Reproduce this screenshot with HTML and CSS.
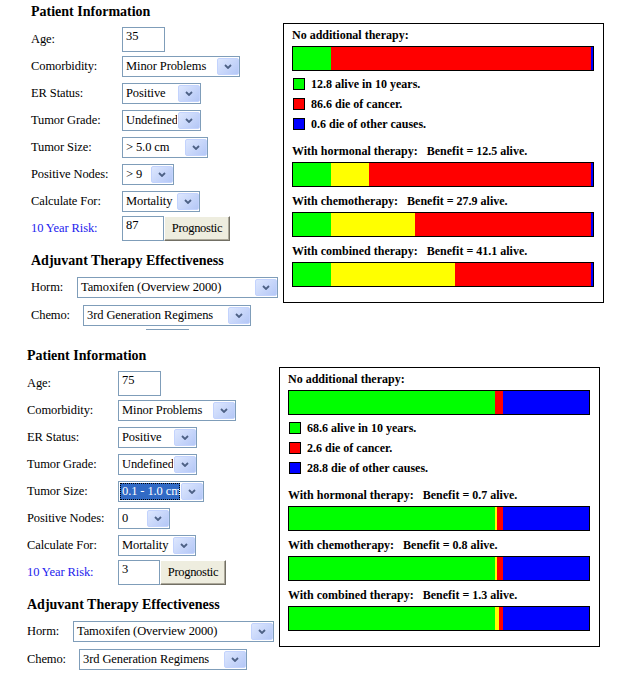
FILE: index.html
```html
<!DOCTYPE html>
<html lang="en">
<head>
    <meta charset="UTF-8">
    <title>Adjuvant Therapy Calculator</title>
    <link rel="stylesheet" href="styles.css">
</head>
<body>
    <div class="calc calc-a">
        <div class="inputs">
            <h2>Patient Information</h2>
            <div class="row row-age">
                <label>Age:</label>
                <input class="text" type="text" value="35">
            </div>
            <div class="row row-first">
                <label>Comorbidity:</label>
                <div class="sel w-como"><span class="val">Minor Problems</span><span class="btn"><svg width="8" height="5" viewBox="0 0 8 5"><path d="M1 1L4 4L7 1" fill="none" stroke="#4d6185" stroke-width="1.8"/></svg></span></div>
            </div>
            <div class="row">
                <label>ER Status:</label>
                <div class="sel w-er"><span class="val">Positive</span><span class="btn"><svg width="8" height="5" viewBox="0 0 8 5"><path d="M1 1L4 4L7 1" fill="none" stroke="#4d6185" stroke-width="1.8"/></svg></span></div>
            </div>
            <div class="row">
                <label>Tumor Grade:</label>
                <div class="sel w-er"><span class="val">Undefined</span><span class="btn"><svg width="8" height="5" viewBox="0 0 8 5"><path d="M1 1L4 4L7 1" fill="none" stroke="#4d6185" stroke-width="1.8"/></svg></span></div>
            </div>
            <div class="row">
                <label>Tumor Size:</label>
                <div class="sel w-size"><span class="val">&gt; 5.0 cm</span><span class="btn"><svg width="8" height="5" viewBox="0 0 8 5"><path d="M1 1L4 4L7 1" fill="none" stroke="#4d6185" stroke-width="1.8"/></svg></span></div>
            </div>
            <div class="row">
                <label>Positive Nodes:</label>
                <div class="sel w-nodes"><span class="val">&gt; 9</span><span class="btn"><svg width="8" height="5" viewBox="0 0 8 5"><path d="M1 1L4 4L7 1" fill="none" stroke="#4d6185" stroke-width="1.8"/></svg></span></div>
            </div>
            <div class="row">
                <label>Calculate For:</label>
                <div class="sel w-calc"><span class="val">Mortality</span><span class="btn"><svg width="8" height="5" viewBox="0 0 8 5"><path d="M1 1L4 4L7 1" fill="none" stroke="#4d6185" stroke-width="1.8"/></svg></span></div>
            </div>
            <div class="row row-risk">
                <label class="risk">10 Year Risk:</label>
                <input class="text text-risk" type="text" value="87">
                <button class="prog">Prognostic</button>
            </div>

            <h2 class="adj">Adjuvant Therapy Effectiveness</h2>
            <div class="row row-horm">
                <label class="l-horm">Horm:</label>
                <div class="sel w-horm"><span class="val">Tamoxifen (Overview 2000)</span><span class="btn"><svg width="8" height="5" viewBox="0 0 8 5"><path d="M1 1L4 4L7 1" fill="none" stroke="#4d6185" stroke-width="1.8"/></svg></span></div>
            </div>
            <div class="row row-chemo">
                <label class="l-chemo">Chemo:</label>
                <div class="sel w-chemo"><span class="val">3rd Generation Regimens</span><span class="btn"><svg width="8" height="5" viewBox="0 0 8 5"><path d="M1 1L4 4L7 1" fill="none" stroke="#4d6185" stroke-width="1.8"/></svg></span></div>
            </div>
            <div class="cut"></div>
        </div>

        <div class="chart">
            <div class="title">No additional therapy:</div>
            <div class="bar">
                <span class="g" style="width:12.8%"></span><span class="r" style="width:86.6%"></span><span class="b" style="width:0.6%"></span>
            </div>
            <div class="legend">
                <div class="key"><span class="swatch g"></span>12.8 alive in 10 years.</div>
                <div class="key"><span class="swatch r"></span>86.6 die of cancer.</div>
                <div class="key"><span class="swatch b"></span>0.6 die of other causes.</div>
            </div>
            <div class="title after-legend">With hormonal therapy:&nbsp; &nbsp;Benefit = 12.5 alive.</div>
            <div class="bar">
                <span class="g" style="width:12.8%"></span><span class="y" style="width:12.5%"></span><span class="r" style="width:74.1%"></span><span class="b" style="width:0.6%"></span>
            </div>
            <div class="title after-bar">With chemotherapy:&nbsp; &nbsp;Benefit = 27.9 alive.</div>
            <div class="bar">
                <span class="g" style="width:12.8%"></span><span class="y" style="width:27.9%"></span><span class="r" style="width:58.7%"></span><span class="b" style="width:0.6%"></span>
            </div>
            <div class="title after-bar">With combined therapy:&nbsp; &nbsp;Benefit = 41.1 alive.</div>
            <div class="bar">
                <span class="g" style="width:12.8%"></span><span class="y" style="width:41.1%"></span><span class="r" style="width:45.5%"></span><span class="b" style="width:0.6%"></span>
            </div>
        </div>
    </div>

    <div class="calc calc-b">
        <div class="inputs">
            <h2>Patient Information</h2>
            <div class="row row-age">
                <label>Age:</label>
                <input class="text" type="text" value="75">
            </div>
            <div class="row row-first">
                <label>Comorbidity:</label>
                <div class="sel w-como"><span class="val">Minor Problems</span><span class="btn"><svg width="8" height="5" viewBox="0 0 8 5"><path d="M1 1L4 4L7 1" fill="none" stroke="#4d6185" stroke-width="1.8"/></svg></span></div>
            </div>
            <div class="row">
                <label>ER Status:</label>
                <div class="sel w-er"><span class="val">Positive</span><span class="btn"><svg width="8" height="5" viewBox="0 0 8 5"><path d="M1 1L4 4L7 1" fill="none" stroke="#4d6185" stroke-width="1.8"/></svg></span></div>
            </div>
            <div class="row">
                <label>Tumor Grade:</label>
                <div class="sel w-er"><span class="val">Undefined</span><span class="btn"><svg width="8" height="5" viewBox="0 0 8 5"><path d="M1 1L4 4L7 1" fill="none" stroke="#4d6185" stroke-width="1.8"/></svg></span></div>
            </div>
            <div class="row">
                <label>Tumor Size:</label>
                <div class="sel w-size focus"><span class="val">0.1 - 1.0 cm</span><span class="btn"><svg width="8" height="5" viewBox="0 0 8 5"><path d="M1 1L4 4L7 1" fill="none" stroke="#4d6185" stroke-width="1.8"/></svg></span></div>
            </div>
            <div class="row">
                <label>Positive Nodes:</label>
                <div class="sel w-nodes"><span class="val">0</span><span class="btn"><svg width="8" height="5" viewBox="0 0 8 5"><path d="M1 1L4 4L7 1" fill="none" stroke="#4d6185" stroke-width="1.8"/></svg></span></div>
            </div>
            <div class="row">
                <label>Calculate For:</label>
                <div class="sel w-calc"><span class="val">Mortality</span><span class="btn"><svg width="8" height="5" viewBox="0 0 8 5"><path d="M1 1L4 4L7 1" fill="none" stroke="#4d6185" stroke-width="1.8"/></svg></span></div>
            </div>
            <div class="row row-risk">
                <label class="risk">10 Year Risk:</label>
                <input class="text text-risk" type="text" value="3">
                <button class="prog">Prognostic</button>
            </div>

            <h2 class="adj">Adjuvant Therapy Effectiveness</h2>
            <div class="row row-horm">
                <label class="l-horm">Horm:</label>
                <div class="sel w-horm"><span class="val">Tamoxifen (Overview 2000)</span><span class="btn"><svg width="8" height="5" viewBox="0 0 8 5"><path d="M1 1L4 4L7 1" fill="none" stroke="#4d6185" stroke-width="1.8"/></svg></span></div>
            </div>
            <div class="row row-chemo">
                <label class="l-chemo">Chemo:</label>
                <div class="sel w-chemo"><span class="val">3rd Generation Regimens</span><span class="btn"><svg width="8" height="5" viewBox="0 0 8 5"><path d="M1 1L4 4L7 1" fill="none" stroke="#4d6185" stroke-width="1.8"/></svg></span></div>
            </div>
        </div>

        <div class="chart">
            <div class="title">No additional therapy:</div>
            <div class="bar">
                <span class="g" style="width:68.6%"></span><span class="r" style="width:2.6%"></span><span class="b" style="width:28.8%"></span>
            </div>
            <div class="legend">
                <div class="key"><span class="swatch g"></span>68.6 alive in 10 years.</div>
                <div class="key"><span class="swatch r"></span>2.6 die of cancer.</div>
                <div class="key"><span class="swatch b"></span>28.8 die of other causes.</div>
            </div>
            <div class="title after-legend">With hormonal therapy:&nbsp; &nbsp;Benefit = 0.7 alive.</div>
            <div class="bar">
                <span class="g" style="width:68.6%"></span><span class="y" style="width:0.7%"></span><span class="r" style="width:1.9%"></span><span class="b" style="width:28.8%"></span>
            </div>
            <div class="title after-bar">With chemotherapy:&nbsp; &nbsp;Benefit = 0.8 alive.</div>
            <div class="bar">
                <span class="g" style="width:68.6%"></span><span class="y" style="width:0.8%"></span><span class="r" style="width:1.8%"></span><span class="b" style="width:28.8%"></span>
            </div>
            <div class="title after-bar">With combined therapy:&nbsp; &nbsp;Benefit = 1.3 alive.</div>
            <div class="bar">
                <span class="g" style="width:68.6%"></span><span class="y" style="width:1.3%"></span><span class="r" style="width:1.3%"></span><span class="b" style="width:28.8%"></span>
            </div>
        </div>
    </div>
</body>
</html>
```

FILE: styles.css
```css
body {
    margin: 0;
    font-family: "Liberation Serif", "Times New Roman", serif;
    color: #000;
    background: #fff;
}
.calc {
    display: flex;
    align-items: flex-start;
    height: 344px;
    padding-left: 31px;
}
.calc-b {
    padding-left: 27px;
}
.inputs {
    width: 252px;
    flex: none;
}
h2 {
    margin: 4px 0 0;
    font-size: 14px;
    line-height: 16px;
    font-weight: bold;
}
h2.adj {
    margin-top: 12px;
}
.row {
    display: flex;
    align-items: center;
    height: 21px;
    margin-top: 6px;
    font-size: 12.5px;
    letter-spacing: -0.1px;
}
.row label {
    width: 91px;
    flex: none;
}
.row-age {
    height: 25px;
    margin-top: 7px;
}
.row-first {
    margin-top: 4px;
}
.row-risk {
    height: 25px;
    margin-top: 4px;
}
.row-horm {
    margin-top: 8px;
}
.row-chemo {
    margin-top: 7px;
}
.row label.l-horm {
    width: 46px;
}
.row label.l-chemo {
    width: 52px;
}
.risk {
    color: #2222ee;
}
.text {
    box-sizing: border-box;
    width: 43px;
    height: 25px;
    margin: 0;
    padding: 0 3px 7px;
    border: 1px solid #7f9db9;
    font: inherit;
    color: #000;
    background: #fff;
}
.text-risk {
    width: 42px;
}
.prog {
    box-sizing: border-box;
    width: 66px;
    height: 25px;
    margin: 0;
    padding: 0;
    font: inherit;
    letter-spacing: -0.3px;
    color: #000;
    background: #eeeddf;
    border: 1px solid;
    border-color: #fff #716f64 #716f64 #fff;
    box-shadow: inset -1px -1px 0 #aca899;
}

/* fake xp dropdowns */
.sel {
    display: flex;
    box-sizing: border-box;
    height: 21px;
    border: 1px solid #7f9db9;
    background: #fff;
}
.sel .val {
    flex: 1;
    min-width: 0;
    overflow: hidden;
    white-space: nowrap;
    padding-left: 3px;
    line-height: 19px;
}
.sel .btn {
    flex: none;
    display: flex;
    align-items: center;
    justify-content: center;
    box-sizing: border-box;
    width: 22px;
    margin: 1px 0 1px 1px;
    border: 1px solid #c3d3fd;
    border-radius: 2px;
    background: linear-gradient(135deg, #dde7fe, #b4c7f6);
}
.sel.focus .val {
    margin: 1px 0 1px 1px;
    padding-left: 2px;
    line-height: 17px;
    color: #fff;
    background: #316ac5;
    outline: 1px dotted #000;
    outline-offset: -1px;
}
.w-como { width: 118px; }
.w-er { width: 79px; }
.w-size { width: 86px; }
.w-nodes { width: 52px; }
.w-calc { width: 78px; }
.w-horm { width: 201px; }
.w-chemo { width: 168px; }
.cut {
    width: 43px;
    height: 1px;
    margin: 3px 0 0 115px;
    background: #7f9db9;
}

/* result chart */
.chart {
    width: 302px;
    margin-top: 23px;
    padding: 4px 9px 15px 8px;
    border: 1px solid #000;
    font-size: 12px;
    font-weight: bold;
    line-height: 14px;
}
.title.after-legend {
    margin-top: 10px;
}
.title.after-bar {
    margin-top: 7px;
}
.bar {
    display: flex;
    box-sizing: border-box;
    height: 25px;
    margin-top: 4px;
    border: 1px solid #000;
}
.legend {
    margin-top: 3px;
}
.key {
    display: flex;
    align-items: center;
    height: 20px;
}
.swatch {
    box-sizing: border-box;
    width: 12px;
    height: 12px;
    margin: 0 6px 0 1px;
    border: 1px solid #000;
}
.g { background: #00ff00; }
.y { background: #ffff00; }
.r { background: #ff0000; }
.b { background: #0000ff; }
```
